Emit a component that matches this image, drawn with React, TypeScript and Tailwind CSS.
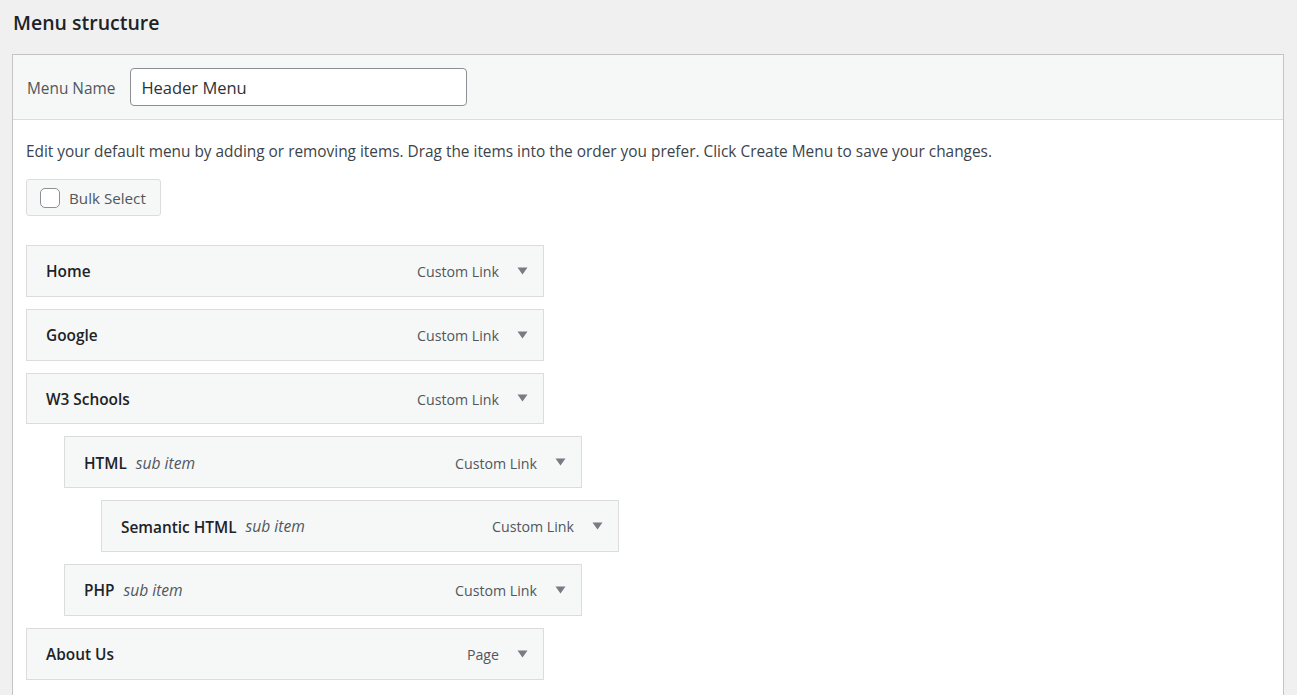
type MenuItem = {
  title: string;
  sub?: boolean;
  type: string;
  depth: number;
};

const items: MenuItem[] = [
  { title: "Home", type: "Custom Link", depth: 0 },
  { title: "Google", type: "Custom Link", depth: 0 },
  { title: "W3 Schools", type: "Custom Link", depth: 0 },
  { title: "HTML", sub: true, type: "Custom Link", depth: 1 },
  { title: "Semantic HTML", sub: true, type: "Custom Link", depth: 2 },
  { title: "PHP", sub: true, type: "Custom Link", depth: 1 },
  { title: "About Us", type: "Page", depth: 0 },
];

const indent = ["ml-0", "ml-[38px]", "ml-[75px]"];

const Arrow = () => (
  <svg width="11" height="8" viewBox="0 0 11 8" className="shrink-0">
    <path d="M0.5 0.5 L10.5 0.5 L5.5 7.5 Z" fill="#787c82" />
  </svg>
);

export default function App() {
  return (
    <div
      className="min-h-screen bg-[#f0f0f1] pl-[12px] pr-[13px] text-[#3c434a]"
      style={{ fontFamily: '"Open Sans", "Noto Sans", sans-serif' }}
    >
      <h2 className="pt-[8px] pb-[16px] pl-[1px] text-[19.5px] font-semibold leading-[30px] text-[#1d2327]">
        Menu structure
      </h2>

      <div className="border border-[#c3c4c7] bg-white">
        {/* header: menu name */}
        <div className="flex h-[65px] items-center gap-[15px] border-b border-[#dcdcde] bg-[#f6f7f7] pl-[14px]">
          <label className="pt-[3px] text-[15.4px] text-[#50575e]">Menu Name</label>
          <div className="flex h-[38px] w-[337px] items-center rounded-[4px] border border-[#8c8f94] bg-white px-[10px] pt-[2px] text-[16.5px] text-[#2c3338]">
            Header Menu
          </div>
        </div>

        {/* body */}
        <div className="px-[13px] pb-[20px] pt-[22px]">
          <p className="text-[15.4px] leading-[20px] text-[#3c434a]">
            Edit your default menu by adding or removing items. Drag the items into the order you prefer. Click Create Menu to save your changes.
          </p>

          <div className="mt-[17px] flex h-[37px] w-[135px] items-center gap-[9px] rounded-[3px] border border-[#dcdcde] bg-[#f6f7f7] pl-[13px]">
            <span className="h-[20px] w-[20px] rounded-[5px] border border-[#8c8f94] bg-white" />
            <span className="pt-[1px] text-[15.2px] text-[#50575e]">Bulk Select</span>
          </div>

          <ul className="mt-[29px] flex flex-col gap-[12px]">
            {items.map((item) => (
              <li
                key={item.title}
                className={`${indent[item.depth]} flex h-[51.8px] w-[518px] items-center border border-[#dcdcde] bg-[#f6f7f7] pl-[19px] pr-[15px]`}
              >
                <span className="pt-[2px] text-[15.4px] font-semibold text-[#1d2327]">{item.title}</span>
                {item.sub && (
                  <span className="ml-[9px] pt-[2px] text-[15.6px] italic text-[#50575e]">sub item</span>
                )}
                <span className="ml-auto mr-[18px] pt-[2px] text-[14.2px] text-[#50575e]">{item.type}</span>
                <Arrow />
              </li>
            ))}
          </ul>
        </div>
      </div>
    </div>
  );
}
